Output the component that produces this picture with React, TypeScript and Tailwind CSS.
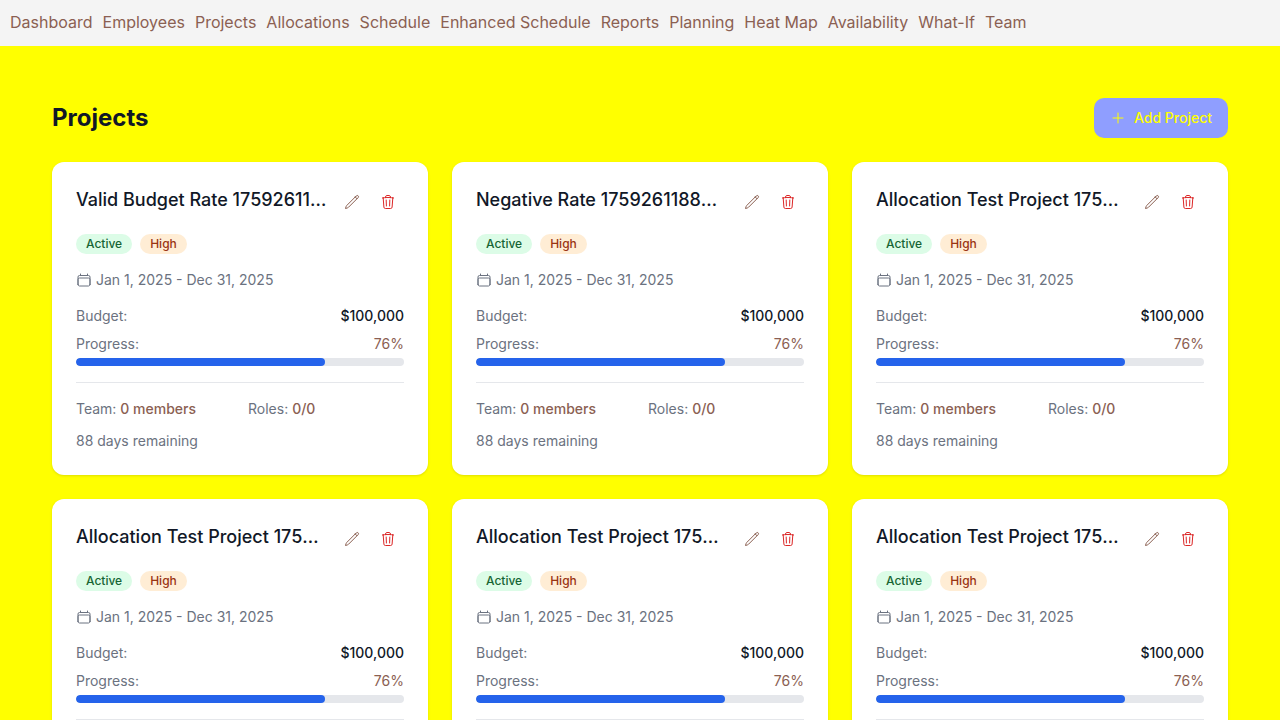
import {
  HiOutlineCalendar,
  HiOutlinePencil,
  HiOutlinePlus,
  HiOutlineTrash,
} from "react-icons/hi2";

const links = [
  "Dashboard",
  "Employees",
  "Projects",
  "Allocations",
  "Schedule",
  "Enhanced Schedule",
  "Reports",
  "Planning",
  "Heat Map",
  "Availability",
  "What-If",
  "Team",
];

type Project = {
  name: string;
  status: string;
  priority: string;
  dates: string;
  budget: string;
  progress: number;
  members: number;
  roles: string;
  daysLeft: number;
};

const base = {
  status: "Active",
  priority: "High",
  dates: "Jan 1, 2025 - Dec 31, 2025",
  budget: "$100,000",
  progress: 76,
  members: 0,
  roles: "0/0",
  daysLeft: 88,
};

const projects: Project[] = [
  { ...base, name: "Valid Budget Rate 1759261188412" },
  { ...base, name: "Negative Rate 1759261188412" },
  { ...base, name: "Allocation Test Project 1759261188" },
  { ...base, name: "Allocation Test Project 1759261190" },
  { ...base, name: "Allocation Test Project 1759261192" },
  { ...base, name: "Allocation Test Project 1759261194" },
];

function ProjectCard({ project }: { project: Project }) {
  return (
    <article className="flex min-w-0 flex-col gap-4 rounded-xl bg-white p-6 text-sm text-[#6b7280] shadow-sm">
      <header className="flex items-start justify-between gap-2">
        <h2 className="min-w-0 truncate text-lg leading-7 font-medium text-[#111827]">
          {project.name}
        </h2>
        <div className="flex shrink-0 gap-1">
          <button
            type="button"
            aria-label="Edit project"
            className="flex size-8 items-center justify-center rounded-md text-[#8b6052]"
          >
            <HiOutlinePencil className="size-4" />
          </button>
          <button
            type="button"
            aria-label="Delete project"
            className="flex size-8 items-center justify-center rounded-md text-[#dc2626]"
          >
            <HiOutlineTrash className="size-4" />
          </button>
        </div>
      </header>

      <div className="flex gap-2 text-xs font-medium">
        <span className="rounded-full bg-[#dcfce7] px-2.5 py-0.5 text-[#166534]">
          {project.status}
        </span>
        <span className="rounded-full bg-[#ffedd5] px-2.5 py-0.5 text-[#9a3412]">
          {project.priority}
        </span>
      </div>

      <div className="flex items-center gap-1">
        <HiOutlineCalendar className="size-4" />
        <span>{project.dates}</span>
      </div>

      <div className="flex flex-col gap-2">
        <div className="flex justify-between">
          <span>Budget:</span>
          <span className="font-medium text-[#111827]">{project.budget}</span>
        </div>
        <div className="flex flex-col gap-1">
          <div className="flex justify-between">
            <span>Progress:</span>
            <span className="text-[#8b6052]">{project.progress}%</span>
          </div>
          <div className="h-2 overflow-hidden rounded bg-[#e5e7eb]">
            <div
              className="h-full rounded bg-[#2563eb]"
              style={{ width: `${project.progress}%` }}
            />
          </div>
        </div>
      </div>

      <div className="grid grid-cols-2 gap-4 border-t border-[#e5e7eb] pt-4">
        <div>
          Team:{" "}
          <span className="font-medium text-[#8b6052]">
            {project.members} members
          </span>
        </div>
        <div>
          Roles:{" "}
          <span className="font-medium text-[#8b6052]">{project.roles}</span>
        </div>
      </div>

      <p className="-mt-1">{project.daysLeft} days remaining</p>
    </article>
  );
}

export default function App() {
  return (
    <div className="min-h-screen bg-[#ffff00] font-['Inter',sans-serif] text-[#8b6052] antialiased">
      <nav className="flex flex-wrap gap-2.5 bg-[#f4f4f4] px-2.5 pt-2.5 pb-3">
        {links.map((label) => (
          <a key={label} href="#" className="leading-6">
            {label}
          </a>
        ))}
      </nav>
      <main className="flex flex-col gap-6 p-13">
        <div className="flex items-center justify-between">
          <h1 className="text-2xl font-bold text-[#111827]">Projects</h1>
          <button
            type="button"
            className="flex h-10 items-center gap-2 rounded-[10px] bg-[#8f9eff] px-4 text-sm font-medium text-[#ffff00]"
          >
            <HiOutlinePlus className="size-4" />
            Add Project
          </button>
        </div>
        <div className="grid grid-cols-3 gap-6">
          {projects.map((project) => (
            <ProjectCard key={project.name} project={project} />
          ))}
        </div>
      </main>
    </div>
  );
}
